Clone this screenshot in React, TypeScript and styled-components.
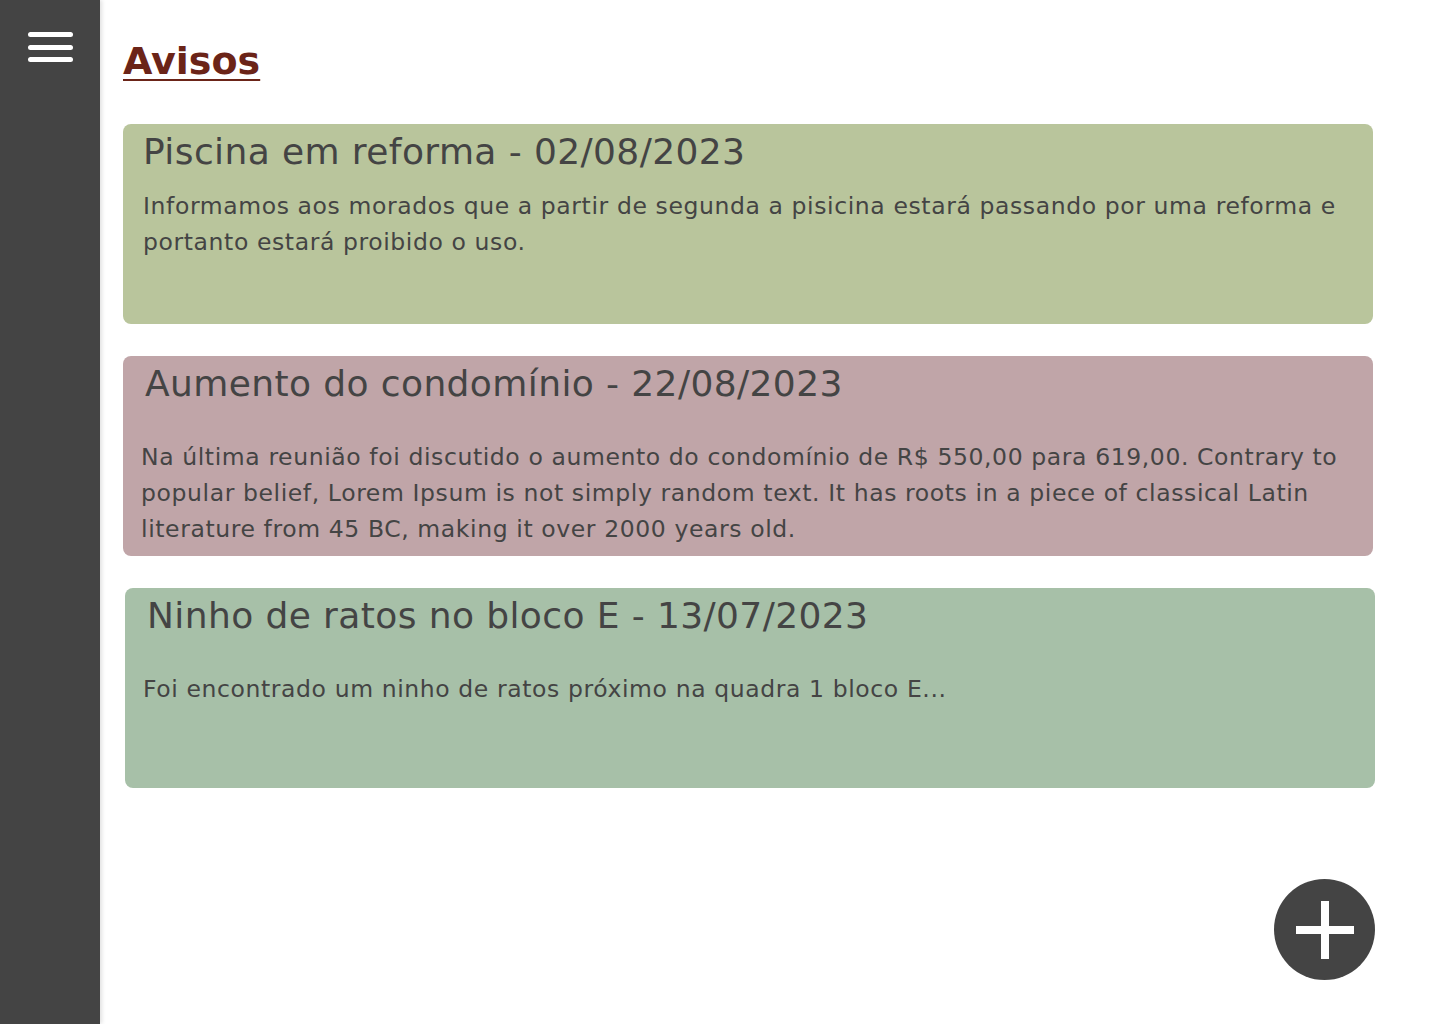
import React from "react";
import styled, { createGlobalStyle } from "styled-components";

const Global = createGlobalStyle`
  html, body { margin: 0; padding: 0; background: #ffffff; }
  body { font-family: "DejaVu Sans", "Noto Sans", sans-serif; }
  * { box-sizing: border-box; }
`;

const Shell = styled.div`
  display: flex;
  min-height: 1024px;
  width: 1440px;
`;

const Sidebar = styled.aside`
  width: 100px;
  flex-shrink: 0;
  background: #444444;
  box-shadow: 2px 0 4px rgba(0, 0, 0, 0.12);
  display: flex;
  flex-direction: column;
  align-items: center;
  padding-top: 32px;
  position: relative;
  z-index: 1;
`;

const MenuButton = styled.button`
  width: 45px;
  height: 30px;
  border: none;
  background: transparent;
  padding: 0;
  display: flex;
  flex-direction: column;
  justify-content: space-between;
  cursor: pointer;
`;

const MenuLine = styled.span`
  display: block;
  height: 5px;
  width: 100%;
  border-radius: 3px;
  background: #ffffff;
`;

const Main = styled.main`
  flex: 1;
  padding: 35px 65px 0 23px;
  position: relative;
`;

const Title = styled.h1`
  margin: 0 0 37px 0;
  font-family: "DejaVu Sans", sans-serif;
  font-weight: 700;
  font-size: 38px;
  line-height: 52px;
  color: #6b2418;
  text-decoration: underline;
  text-decoration-thickness: 2px;
  text-underline-offset: 5px;
`;

const List = styled.div`
  display: flex;
  flex-direction: column;
  gap: 32px;
`;

const Card = styled.article<{ $bg: string; $shift?: number }>`
  width: 1250px;
  height: 200px;
  margin-left: ${(p) => p.$shift ?? 0}px;
  background: ${(p) => p.$bg};
  border-radius: 8px;
  padding: 4px 20px 0 20px;
`;

const CardTitle = styled.h2<{ $dx?: number }>`
  margin: 0 0 0 ${(p) => p.$dx ?? 0}px;
  font-family: "DejaVu Sans", sans-serif;
  font-weight: 400;
  font-size: 36px;
  letter-spacing: 0.4px;
  line-height: 48px;
  color: #444444;
`;

const CardBody = styled.p<{ $gap?: number; $dx?: number }>`
  margin: ${(p) => p.$gap ?? 12}px 0 0 ${(p) => p.$dx ?? 0}px;
  font-family: "DejaVu Sans", sans-serif;
  font-weight: 400;
  font-size: 23.5px;
  letter-spacing: 0.6px;
  line-height: 36px;
  color: #444444;
`;

const Fab = styled.button`
  position: absolute;
  right: 65px;
  top: 879px;
  width: 101px;
  height: 101px;
  border-radius: 50%;
  border: none;
  background: #444444;
  display: flex;
  align-items: center;
  justify-content: center;
  cursor: pointer;
  padding: 0;
`;

const notices = [
  {
    title: "Piscina em reforma - 02/08/2023",
    body: "Informamos aos morados que a partir de segunda a pisicina estará passando por uma reforma e portanto estará proibido o uso.",
    bg: "#b9c59c",
    shift: 0,
    titleDx: 0,
    bodyGap: 12,
    bodyDx: 0,
  },
  {
    title: "Aumento do condomínio - 22/08/2023",
    body: "Na última reunião foi discutido o aumento do condomínio de R$ 550,00 para 619,00. Contrary to popular belief, Lorem Ipsum is not simply random text. It has roots in a piece of classical Latin literature from 45 BC, making it over 2000 years old.",
    bg: "#c0a5a8",
    shift: 0,
    titleDx: 2,
    bodyGap: 31,
    bodyDx: -2,
  },
  {
    title: "Ninho de ratos no bloco E - 13/07/2023",
    body: "Foi encontrado um ninho de ratos próximo na quadra 1 bloco E...",
    bg: "#a7c0a8",
    shift: 2,
    titleDx: 2,
    bodyGap: 31,
    bodyDx: -2,
  },
];

export default function App() {
  return (
    <>
      <Global />
      <Shell>
        <Sidebar>
          <MenuButton aria-label="Menu">
            <MenuLine />
            <MenuLine />
            <MenuLine />
          </MenuButton>
        </Sidebar>
        <Main>
          <Title>Avisos</Title>
          <List>
            {notices.map((n) => (
              <Card key={n.title} $bg={n.bg} $shift={n.shift}>
                <CardTitle $dx={n.titleDx}>{n.title}</CardTitle>
                <CardBody $gap={n.bodyGap} $dx={n.bodyDx}>
                  {n.body}
                </CardBody>
              </Card>
            ))}
          </List>
          <Fab aria-label="Adicionar aviso">
            <svg width="58" height="58" viewBox="0 0 58 58">
              <rect x="0" y="25" width="58" height="8" fill="#ffffff" />
              <rect x="25" y="0" width="8" height="58" fill="#ffffff" />
            </svg>
          </Fab>
        </Main>
      </Shell>
    </>
  );
}
